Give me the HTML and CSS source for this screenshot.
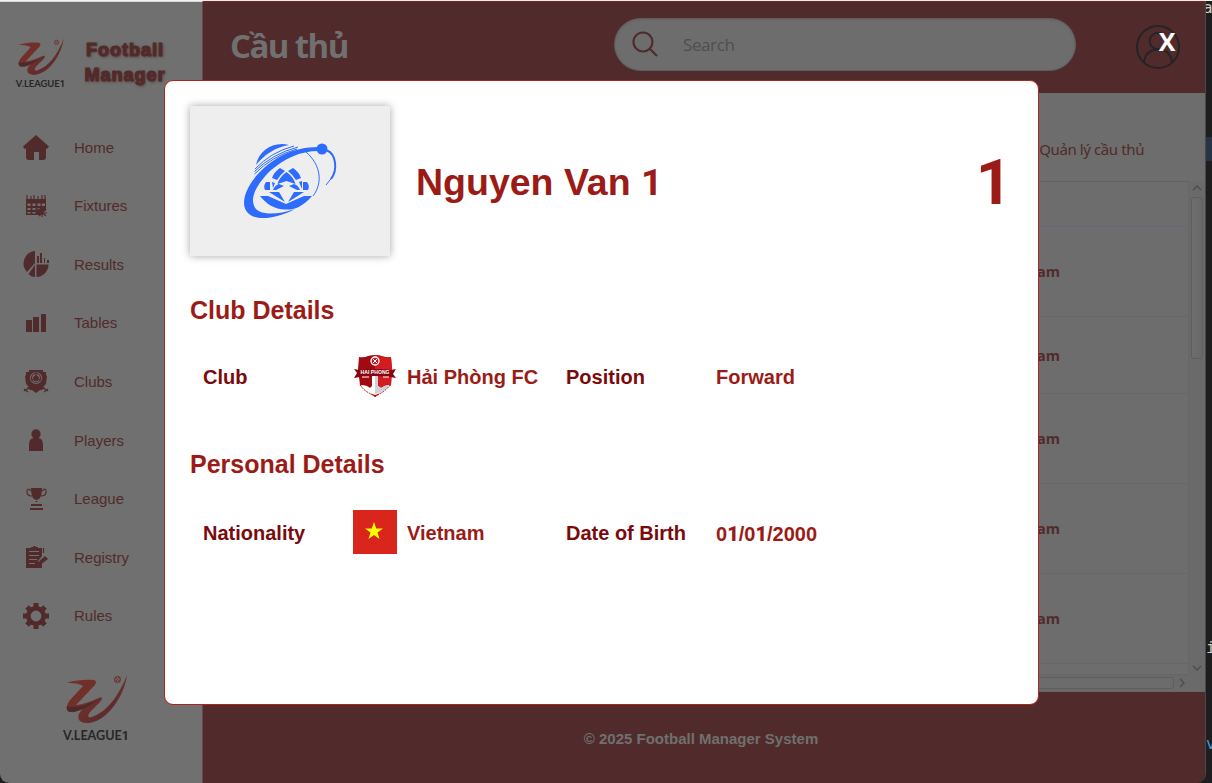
FILE: index.html
```html
<!DOCTYPE html>
<html lang="vi">
<head>
<meta charset="utf-8">
<title>Football Manager</title>
<link rel="stylesheet" href="styles.css">
</head>
<body>
<svg class="defs" width="0" height="0">
  <defs>
    <linearGradient id="ribbon" x1="0" y1="0" x2="1" y2="1"><stop offset="0" stop-color="#752f2a"/><stop offset=".45" stop-color="#70302b"/><stop offset="1" stop-color="#4c292b"/></linearGradient>
    <symbol id="vleague" viewBox="0 0 68 67">
      <path fill="url(#ribbon)" d="M4.5 7.700C14 5 24 4.500 32 5C35 6 34.500 9 31 12L14 30C24 29 32 25 38 22.500C41 22 40.500 24 38 27L30 35C26 39 25 42 28 42.500C45 38 57 20 65 0C62 22 45 46 27 48C17 49 14 43 18 37L24 30C20 34 14 38 8 37C4 36 3 32 8 25L21 11C16 8 10 8 4.500 7.700Z"/>
      <path fill="#4c292b" d="M8 32Q26 32 38 22.500L30 29Q18 37 8 37Q4 36 5 31Z"/>
      <circle cx="55.500" cy="4.500" r="2.800" fill="none" stroke="#713632" stroke-width="1.300"/><path d="m54 3 3 3m0-3-3 3" stroke="#713632"/>
      <text x="1" y="64.500" textLength="66" lengthAdjust="spacingAndGlyphs" class="logo-text">V.LEAGUE<tspan class="one">1</tspan></text>
    </symbol>
  </defs>
</svg>
<div class="screen">
  <div class="app">
    <aside class="sidebar">
      <div class="brand">
        <svg class="brand-logo"><use href="#vleague"/></svg>
        <div class="brand-name"><div>Football</div><div>Manager</div></div>
      </div>
      <nav class="nav">
        <div class="nav-item"><svg viewBox="0 0 26 26"><path d="M13 1 26 12.500 24 15 23 14.500V23q0 3-3 3h-4v-8h-5v8H6q-3 0-3-3v-8.500L1.500 15 0 12.500Z"/></svg><span>Home</span></div>
        <div class="nav-item"><svg viewBox="0 0 26 26"><path fill-rule="evenodd" d="M3 6h20v12h-4v4H3ZM4.500 10.500v2.500h3v-2.500Zm5 0v2.500h3v-2.500Zm5 0v2.500h3v-2.500Zm4.500 0v2.500h3v-2.500ZM4.500 15v2h3v-2Zm5 0v2h3v-2Zm5 0v2h2v-2ZM4.500 19v1.500h3v-1.500Zm5 0v1.500h3v-1.500Z"/><path class="line" d="M4 2v4M8 3v3M11 2v4M15 3v3M19 2v4M22 2v4M15 16l8 7m0-7-7 7m3-8v9m-4-4h9"/></svg><span>Fixtures</span></div>
        <div class="nav-item"><svg viewBox="0 0 26 26"><path d="M12 0v12L4 21A12.500 12.500 0 0 1 12 0ZM13.500 13.500h12A12.500 12.500 0 0 1 13.500 26ZM12 14v12q-4 0-6.500-3ZM14 5h2v7h-2Zm3-3h2v10h-2Zm4 5h1v5h-1Zm3 2h2v3h-2Z"/></svg><span>Results</span></div>
        <div class="nav-item"><svg viewBox="0 0 26 26"><path d="M3 10h6v12H3Zm7-3h6v15h-6Zm8-3h5v18h-5Z"/></svg><span>Tables</span></div>
        <div class="nav-item"><svg viewBox="0 0 26 26"><path fill-rule="evenodd" d="M6 1h14v2h3v3l1 1-1 8-3 3H6l-3-3-1-8 1-1V3h3ZM13 3a6 6 0 1 0 0 12 6 6 0 0 0 0-12Z"/><circle class="line" cx="13" cy="9" r="4.500"/><path d="m13 6 3 2-1 4h-4l-1-4ZM4 18h18l-3 3H7Zm5 3h8l-4 3Z"/><path class="line" d="m1 22 5-3m-5 1 4 3m20-1-5-3m5 1-4 3M13 3v4m-5 4 3-1m7 1-3-1"/></svg><span>Clubs</span></div>
        <div class="nav-item"><svg viewBox="0 0 26 26"><circle cx="13" cy="7" r="4.700"/><path d="M6 24v-6q0-7 5-7h4q5 0 5 7v6Z"/></svg><span>Players</span></div>
        <div class="nav-item"><svg viewBox="0 0 26 26"><path d="M8 2h11q0 12-5.500 12T8 2Zm4.500 13h2v1h-2ZM8 18h11v2H8Zm-1 4h13v2H7Z"/><path class="line" d="M8 5Q4 1 4 6q0 4 5 4M19 5q4-4 4 1 0 4-5 4"/></svg><span>League</span></div>
        <div class="nav-item"><svg viewBox="0 0 26 26"><path fill-rule="evenodd" d="M3 4h5V3h2q1-2 3 0h2v1h4v8l-4 5v2h4v5H3ZM6 7v1h10V7Zm0 4v1h10v-1Zm0 4v1h8v-1Zm0 4v1h6v-1Z"/><path d="m13 20 9-8 3 3-8 6-4 2Z"/><path class="line" d="M20.500 4v5"/></svg><span>Registry</span></div>
        <div class="nav-item"><svg viewBox="0 0 26 26"><circle cx="13" cy="13" r="7.700" fill="none" stroke="#512b2b" stroke-width="4.600"/><path class="teeth" d="M13 0v5m0 16v5M0 13h5m16 0h5M4 4l4 4m10 10 4 4M4 22l4-4M18 8l4-4"/></svg><span>Rules</span></div>
      </nav>
      <svg class="side-logo"><use href="#vleague"/></svg>
    </aside>
    <main class="main">
      <header class="header">
        <h1>Cầu thủ</h1>
        <div class="search"><svg viewBox="0 0 28 28"><circle cx="11" cy="11" r="9.500"/><path d="m17.500 17.500 7.500 7.500"/></svg><span>Search</span></div>
        <svg class="avatar" viewBox="0 0 44 44"><circle cx="22" cy="22" r="21"/><circle cx="22" cy="16" r="8.300"/><path d="M8 38q1-13 14-13.500Q35 25 36 38"/></svg>
      </header>
      <section class="content">
        <div class="tab">Quản lý cầu thủ</div>
        <div class="table-area">
          <div class="table">
            <div class="row row-head"></div>
            <div class="row">Vietnam</div>
            <div class="row row-short">Vietnam</div>
            <div class="row">Vietnam</div>
            <div class="row">Vietnam</div>
            <div class="row">Vietnam</div>
          </div>
          <div class="vscroll"><svg viewBox="0 0 10 6"><path d="m1 5 4-4 4 4"/></svg><div class="vthumb"></div><svg class="down" viewBox="0 0 10 6"><path d="m1 1 4 4 4-4"/></svg></div>
          <div class="hscroll"><div class="hthumb"></div><svg viewBox="0 0 6 10"><path d="m1 1 4 4-4 4"/></svg></div>
        </div>
      </section>
      <footer class="footer">© 2025 Football Manager System</footer>
    </main>
  </div>
  <div class="desktop">
    <span class="code code-a">a</span><span class="mark"></span><span class="code code-i">i</span><span class="code code-v">v</span>
  </div>
  <div class="close">X</div>
  <section class="modal">
    <div class="profile">
      <div class="photo">
        <svg viewBox="0 0 100 82" width="100" height="82">
          <path d="M82 7C55 6 33 17 17 35C4 50 1 65 7 72C14 81 34 80 55 69C37 75 22 75 16 69C8 59 17 44 30 31C45 18 62 10 82 11Z"/>
          <path d="M16 25C19 10 34 1 49 5C36 7 25 14 16 25Z"/>
          <path class="s1" d="M15 29Q31 12 54 6M14.500 31.500Q32 14 58 7M14.500 34Q32 16 57 9"/>
          <path class="s1" d="M66 12C81 25 83 43 73 56"/><path class="s2" d="M87 10.500C96 14 98 30 91 39"/><path class="s1" d="M91.500 38 86 45"/>
          <circle cx="82" cy="9" r="5.500"/>
          <path d="M20 56h8l18 8 18-8h8C62 68 52 70 46 69.500 36 70 26 64 20 56ZM29 52h10l6 10ZM54 52h10L48 62ZM46.500 32q7 5 9 12l-9-3-9 3q2-7 9-12ZM40 28l5 3q-5 4-8 9l-5-2q2-6 8-10ZM53 28l-5 3q5 4 8 9l5-2q-2-6-8-10ZM26 42h4v8h-5q-2-4 1-8Zm37 0h4q3 4 1 8h-5ZM32 42l3 1-2 5ZM33 50q2-5 6-6l5 2-8 4ZM60 50q-2-5-6-6l-5 2 8 4ZM59 42l3-1v8Z"/>
        </svg>
      </div>
      <div class="player-name">Nguyen Van <span class="one">1</span></div>
      <div class="number one">1</div>
    </div>
    <h2>Club Details</h2>
    <div class="details">
      <span class="label">Club</span>
      <div class="value">
        <svg viewBox="0 0 44 44" width="44" height="44">
          <path fill="#a00a10" d="M6 3q5 1 9-1 7-2 14 0 5 2 9 1l1 12-1 16-16 12L7 31 5 15Z"/>
          <path fill="#d21c20" d="M22 1q5 0 8 2 4 1 8 0l1 12-1 16-16 12Z"/>
          <path fill="#fff" d="M8 31q6 0 9 3l2-2V15h6v17l3 2q4-3 9-3-2 7-15 10Q10 38 8 31Z"/><path fill="#ccd2d5" d="M22 15h3v17l3 2q4-3 8-3-2 6-14 9Z"/>
          <circle cx="22" cy="7" r="4" fill="#b32226" stroke="#fff" stroke-width="1.300"/><path d="m20 5 4 4m0-4-4 4" stroke="#fff"/>
          <path fill="#850610" d="m1 15 5 1q16-2 32 0l5-1-3 5 3 4-6-1q-15-2-30 0l-6 1 3-5Z"/>
          <text x="22" y="20" text-anchor="middle" textLength="29" class="crest-text">HAI PHONG</text>
          <path d="M7 31q5 7 15 11 10-4 15-11" fill="none" stroke="#b30c13" stroke-dasharray="2 1"/><path d="M9 23h7m14 0h6" stroke="#fff"/>
        </svg>
        <span>Hải Phòng FC</span>
      </div>
      <span class="label">Position</span><span class="value plain">Forward</span>
    </div>
    <h2 class="second">Personal Details</h2>
    <div class="details">
      <span class="label">Nationality</span>
      <div class="value"><svg viewBox="0 0 44 44" width="44" height="44"><path fill="#da251d" d="M0 0h44v44H0Z"/><path fill="#ff0" d="m21 12 2.200 6.500H30L24.500 22.500 26.500 29 21 25l-5.500 4 2-6.500L12 18.500h6.800Z"/></svg><span>Vietnam</span></div>
      <span class="label">Date of Birth</span><div class="plain date">0<b class="one">1</b>/0<b class="one">1</b>/2000</div>
    </div>
  </section>
</div>
</body>
</html>
```
FILE: styles.css
```css
* { box-sizing: border-box; }
body { margin: 0; font-family: "Liberation Sans", Arial, sans-serif; background: #1e1e1e; overflow: hidden; }
.defs { position: absolute; }
.one { font-family: Roboto, "Liberation Sans", sans-serif; }
.screen { position: relative; width: 1212px; height: 783px; display: flex; border-top: 1px solid #f2f2f2; background: #1e1e1e; }
.app { width: 1206px; height: 782px; display: flex; border-right: 1px solid #484848; border-radius: 0 0 9px 9px; overflow: hidden; }
.logo-text { font: bold 13px "Lato", sans-serif; fill: #272727; }
.logo-text .one { font-family: Roboto, sans-serif; }

.sidebar { width: 203px; background: #707070; border-top: 1px solid #dadada; border-right: 1px solid #684848; display: flex; flex-direction: column; }
.brand { height: 116px; padding: 37px 0 0 15px; display: flex; }
.brand-logo { width: 51px; height: 50px; }
.brand-name { width: 88px; margin-left: 15px; text-align: center; font-size: 18px; line-height: 25px; font-weight: bold; color: #512b2b; letter-spacing: 1px; -webkit-text-stroke: 1.2px #512b2b; text-shadow: 1px 1px 3px #542d2d; margin-top: -1px; }
.nav { display: flex; flex-direction: column; height: 527px; }
.nav-item { flex: 1; display: flex; align-items: center; padding-left: 23px; font-size: 15px; color: #512b2b; }
.nav-item svg { width: 26px; height: 26px; margin-right: 25px; fill: #512b2b; }
.nav-item .line { fill: none; stroke: #512b2b; stroke-width: 1.2; }
.nav-item .teeth { stroke: #512b2b; stroke-width: 5; fill: none; }
.side-logo { width: 68px; height: 67px; margin: 30px 0 0 62px; }

.main { flex: 1; display: flex; flex-direction: column; }
.header { height: 92px; flex: none; background: #512b2b; border-top: 1px solid #7d2422; display: flex; align-items: flex-start; padding-left: 27px; }
.header h1 { margin: 18px 0 0; width: 384px; font: bold 33px/52px "Open Sans", "Noto Sans", sans-serif; letter-spacing: -1.6px; color: #707070; }
.search { width: 462px; height: 53px; margin-top: 16px; border-radius: 27px; background: #6d6d6d; border: 1px solid #615b5b; box-shadow: inset 0 1px 2px #656565; display: flex; align-items: center; padding-left: 17px; font: 18px "Open Sans", sans-serif; color: #4f4f4f; }
.search svg { width: 28px; height: 28px; margin-right: 23px; fill: none; stroke: #512b2b; stroke-width: 2.2; }
.search span { font-size: 17px; letter-spacing: -.4px; }
.avatar { width: 44px; height: 44px; margin: 23px 0 0 60px; fill: none; stroke: #242424; stroke-width: 2; }
.close { position: absolute; left: 1151px; top: 20px; width: 32px; text-align: center; font: bold 25px/40px "Open Sans", sans-serif; color: #fff; }

.content { height: 599px; background: #6d6d6d; }
.tab { height: 88px; padding: 44px 61px 0 0; text-align: right; font: 15px/24px "Noto Sans", sans-serif; letter-spacing: -.4px; color: #512b2b; }
.table-area { display: grid; grid-template-columns: 986px 16px; grid-template-rows: 494px 17px; }
.table { border-top: 1px solid #626262; border-bottom: 1px solid #666; border-right: 1px solid #676767; }
.row { height: 90px; border-bottom: 1px solid #676767; display: flex; align-items: center; justify-content: flex-end; padding-right: 128px; font: bold 14.500px "Open Sans", sans-serif; color: #512b2b; }
.row-head { height: 45px; border-color: #666680; }
.row-short { height: 77px; }
.vscroll { background: #6a6a6a; display: flex; flex-direction: column; align-items: center; padding: 4px 0 4px; }
.vscroll svg { width: 10px; height: 6px; }
.vscroll .down { margin-top: auto; }
.vthumb { width: 12px; height: 162px; margin-top: 6px; border: 1px solid #5e5e5e; border-radius: 3px; background: linear-gradient(90deg, #6e6e6e, #686868); }
.table-area svg { fill: none; stroke: #4c4c4c; stroke-width: 1.3; }
.hscroll { grid-column: 1 / 3; background: #6a6a6a; border-bottom: 1px solid #666; display: flex; align-items: center; }
.hthumb { width: 971px; height: 12px; border: 1px solid #5e5e5e; border-radius: 3px; background: #6c6c6c; }
.hscroll svg { width: 6px; height: 10px; margin-left: 5px; }
.footer { flex: 1; background: #512b2b; color: #707070; display: flex; align-items: center; justify-content: center; font-size: 15px; font-weight: bold; padding: 1px 6px 0 0; }

.desktop { width: 6px; display: flex; flex-direction: column; overflow: hidden; background: #1e1e1e; }
.code { font: 16px/20px "DejaVu Sans Mono", monospace; color: #ccc; margin-left: -2px; height: 20px; }
.code-a { margin-left: -3px; margin-top: -3px; }
.mark { height: 24px; margin-top: 119px; background: #253545; }
.code-i { margin-top: 477px; margin-left: 0; }
.code-v { margin-top: 76px; color: #4597d4; margin-left: 0; }

.modal { position: absolute; left: 164px; top: 79px; width: 875px; height: 625px; padding: 25px; background: #fff; border: 1px solid #b1211d; border-radius: 9px; color: #9b1c17; font-weight: bold; }
.profile { height: 150px; display: flex; align-items: center; }
.photo { width: 200px; height: 150px; background: #eee; box-shadow: 0 0 8px rgba(0, 0, 0, .35); padding: 34px 50px; }
.photo svg { display: block; fill: #2e6cff; }
.photo .s1, .photo .s2 { fill: none; stroke: #2e6cff; stroke-width: 1; }
.photo .s2 { stroke-width: 2; }
.player-name { margin-left: 26px; padding-top: 2px; font-size: 37.500px; }
.number { margin-left: auto; margin-right: 1px; padding-top: 3px; font-size: 63px; line-height: 62px; }
.modal h2 { margin: 39px 0 0; font-size: 25px; line-height: 30px; }
.details { display: grid; grid-template-columns: 150px 213px 150px 1fr; align-items: center; padding-left: 13px; margin-top: 29px; font-size: 20px; height: 44px; }
.details .label { color: #7a0a0c; padding-top: 3px; }
.value { display: flex; align-items: center; gap: 10px; }
.value span, .plain { padding-top: 3px; }
.modal .second { margin-top: 51px; }
.second + .details { margin-top: 31px; }
.crest-text { font: bold 5px "Liberation Sans", sans-serif; fill: #fff; }
```
